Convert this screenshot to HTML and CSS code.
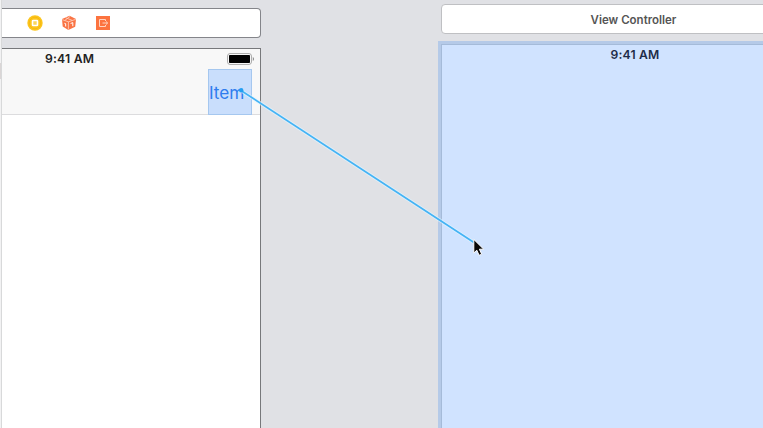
FILE: index.html
```html
<!DOCTYPE html>
<html lang="en">
<head>
<meta charset="utf-8">
<title>Storyboard</title>
<link rel="stylesheet" href="styles.css">
</head>
<body>
<main class="canvas">
  <div class="edge"><i class="edge-mark"></i></div>
  <section class="scene scene-left">
    <header class="dock">
      <svg class="icon" width="16" height="16" viewBox="0 0 16 16"><circle cx="8" cy="8" r="7.7" fill="#fcc51c"/><circle cx="8" cy="8" r="5.8" fill="none" stroke="#f5b60f" stroke-width=".8"/><rect x="5.5" y="5.5" width="5" height="5" rx=".6" fill="#fbd65a" stroke="#fff" stroke-width="1.6"/></svg>
      <svg class="icon" width="16" height="16" viewBox="0 0 16 16"><path d="M1 4 8.5.8 15 4.1 14.2 11.7 7.3 15 1.7 11.6Z" fill="#fa7445"/><path d="M1.2 4.6 7.4 6.8 14.8 4.3M7.4 6.8v7.8M4.6 2.7l6.6 2.7M9 1.5 3.8 5.4" fill="none" stroke="#ffd4c3" stroke-width=".8"/><path d="m3.4 8.3 1.3.4v2.8M9.6 8.5l2.2-.9v3.6" fill="none" stroke="#fff"/></svg>
      <svg class="icon" width="16" height="16" viewBox="0 0 16 16"><path d="M1 1h14v14H1z" fill="#fc733f"/><path d="M10.5 6V4.5h-6v7h6V10M7.5 8h5M11 6.5 12.7 8 11 9.5" fill="none" stroke="#ffd3c0"/></svg>
    </header>
    <div class="phone">
      <div class="navbar">
        <div class="status"><span class="time">9:41 AM</span>
          <svg class="battery" width="28" height="12" viewBox="0 0 28 12"><rect x=".6" y=".6" width="23.8" height="10.8" rx="2.4" fill="#fff" stroke="#a5a5a5"/><rect x="2" y="2" width="21" height="8" rx=".8"/><path d="M25.8 4c1.6.7 1.6 3.3 0 4Z" fill="#888"/></svg>
        </div>
        <div class="item">Item</div>
      </div>
    </div>
  </section>
  <section class="scene scene-right">
    <header class="title">View Controller</header>
    <div class="target"><div class="view"><span class="time">9:41 AM</span></div></div>
  </section>
  <svg class="connection" width="763" height="428" viewBox="0 0 763 428">
    <path d="M241 90.5 474 242.5" stroke="#e2f5ff" stroke-opacity=".65" stroke-width="3.6"/>
    <path d="M241 90.5 474 242.5" stroke="#44b3f5" stroke-width="1.7"/>
    <circle cx="241.2" cy="90.3" r="2.2" fill="#249ff2"/>
    <path d="M473.8 239.4v13.6l3-2.8 2.3 5.1 2.6-1.1-2.3-5h4.3Z" fill="#080808" stroke="#fff" stroke-width="1"/>
  </svg>
</main>
</body>
</html>
```
FILE: styles.css
```css
* { box-sizing: border-box; }
body { margin: 0; font-family: Inter, "Liberation Sans", sans-serif; }
.canvas {
  position: relative;
  display: flex;
  width: 763px;
  height: 428px;
  overflow: hidden;
  background: #e0e1e5;
}
.edge { width: 2px; background: #f2f2f3; border-right: 1px solid #d8d9da; }
.edge-mark { display: block; width: 1px; height: 16px; margin-top: 63px; background: #dad6d6; }
.scene { display: flex; flex-direction: column; flex: none; }
.scene-left { width: 259px; padding-top: 8px; }
.dock {
  display: flex;
  align-items: center;
  gap: 18px;
  height: 30px;
  padding-left: 25px;
  background: #fff;
  border: 1px solid #84858a;
  border-left: 0;
  border-radius: 0 4px 4px 0;
}
.icon { flex: none; }
.phone {
  flex: 1;
  margin-top: 10px;
  background: #fff;
  border-top: 1px solid #77787b;
  border-right: 1px solid #77787b;
}
.navbar {
  display: flex;
  flex-direction: column;
  height: 66px;
  background: #f8f8f8;
  border-bottom: 1px solid #dcdcde;
}
.status {
  display: flex;
  flex: none;
  justify-content: space-between;
  align-items: center;
  height: 20px;
  padding: 0 5px 0 43px;
}
.time { font-size: 12.2px; font-weight: 600; line-height: 16px; letter-spacing: 0.2px; color: #222; white-space: nowrap; }
.battery { flex: none; }
.item {
  flex: none;
  align-self: flex-end;
  width: 44px;
  height: 46px;
  margin-right: 8px;
  border: 1px solid #a5c7ef;
  background: #c9defc;
  color: #2f7cee;
  font-size: 17.2px;
  line-height: 45px;
}
.scene-right { width: 325px; margin-left: 177px; padding-top: 4px; }
.title {
  flex: none;
  width: 385px;
  height: 30px;
  margin-left: 3px;
  border: 1px solid #bfc0c3;
  border-radius: 4px;
  background: #fff;
  color: #555;
  font-size: 11.5px;
  font-weight: 600;
  line-height: 30px;
  text-align: center;
}
.target {
  flex: 1;
  width: 394px;
  margin-top: 7px;
  padding: 3px 3px 0;
  background: #b5cae8;
}
.view {
  height: 100%;
  border: 1px solid #a5bbd9;
  border-bottom: 0;
  background: #d0e3ff;
  font-size: 12px;
  line-height: 20px;
  text-align: center;
}
.view .time { color: #1d2c48; }
.connection { position: absolute; inset: 0; fill: none; pointer-events: none; }
```
